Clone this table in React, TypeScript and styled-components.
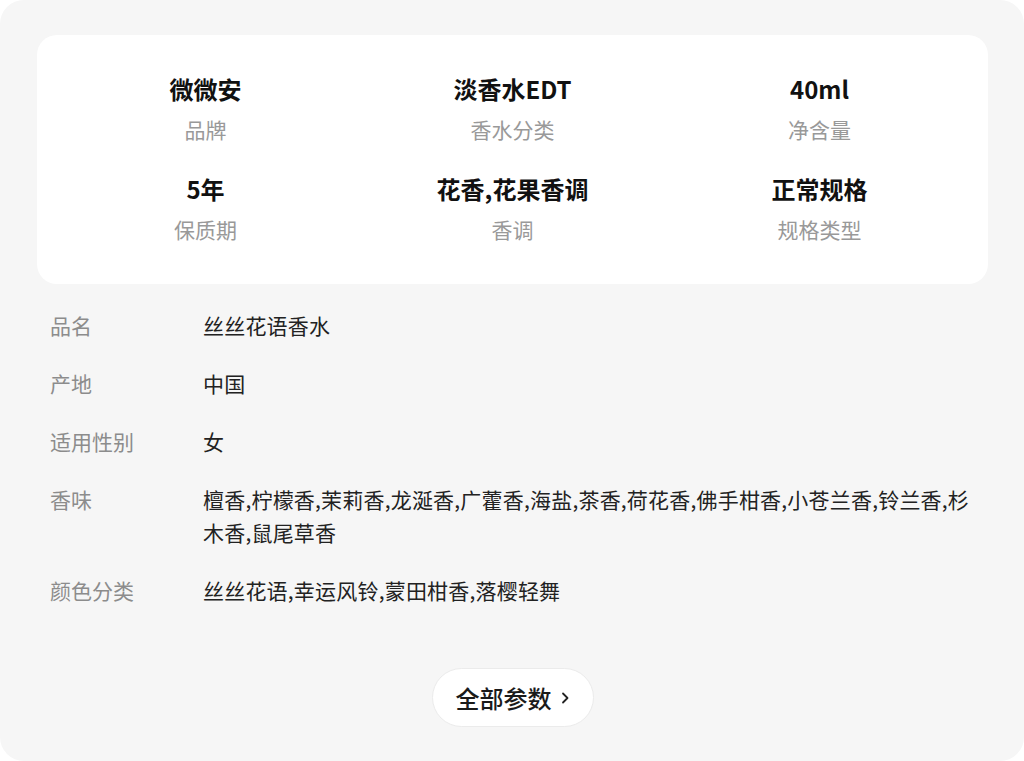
import styled, { createGlobalStyle } from 'styled-components';

interface Highlight {
    value: string;
    label: string;
}

interface Param {
    name: string;
    value: string;
}

const highlights: Highlight[] = [
    { value: '微微安', label: '品牌' },
    { value: '淡香水EDT', label: '香水分类' },
    { value: '40ml', label: '净含量' },
    { value: '5年', label: '保质期' },
    { value: '花香,花果香调', label: '香调' },
    { value: '正常规格', label: '规格类型' },
];

const params: Param[] = [
    { name: '品名', value: '丝丝花语香水' },
    { name: '产地', value: '中国' },
    { name: '适用性别', value: '女' },
    { name: '香味', value: '檀香,柠檬香,茉莉香,龙涎香,广藿香,海盐,茶香,荷花香,佛手柑香,小苍兰香,铃兰香,杉木香,鼠尾草香' },
    { name: '颜色分类', value: '丝丝花语,幸运风铃,蒙田柑香,落樱轻舞' },
];

function App() {
    return (
        <>
            <GlobalStyle />
            <PanelStyle>
                <SummaryCardStyle>
                    {
                        highlights.map((item) => (
                            <SummaryItemStyle key={item.label}>
                                <strong>{item.value}</strong>
                                <span>{item.label}</span>
                            </SummaryItemStyle>
                        ))
                    }
                </SummaryCardStyle>

                <ParamListStyle>
                    {
                        params.map((param) => (
                            <ParamRowStyle key={param.name}>
                                <dt>{param.name}</dt>
                                <dd>{param.value}</dd>
                            </ParamRowStyle>
                        ))
                    }
                </ParamListStyle>

                <FooterStyle>
                    <MoreButtonStyle>
                        全部参数
                        <svg width="9" height="14" viewBox="0 0 9 14">
                            <path d="M2 2.5 L6.5 7 L2 11.5" fill="none" stroke="#222" strokeWidth="1.8" strokeLinecap="round" strokeLinejoin="round" />
                        </svg>
                    </MoreButtonStyle>
                </FooterStyle>
            </PanelStyle>
        </>
    );
}

const GlobalStyle = createGlobalStyle`
    html, body {
        margin: 0;
        padding: 0;
        background: #fff;
    }

    body {
        font-family: "Noto Sans CJK SC", "Noto Sans", sans-serif;
    }
`;

const PanelStyle = styled.div`
    width: 1024px;
    height: 761px;
    box-sizing: border-box;
    padding: 35px 36px 0 37px;
    background: #f6f6f6;
    border-radius: 24px;
    overflow: hidden;
`;

const SummaryCardStyle = styled.div`
    display: grid;
    grid-template-columns: repeat(3, 1fr);
    row-gap: 29px;
    padding: 38px 15px 40px;
    background: #fff;
    border-radius: 20px;
`;

const SummaryItemStyle = styled.div`
    display: flex;
    flex-direction: column;
    align-items: center;
    gap: 9px;

    strong {
        font-size: 24px;
        line-height: 32px;
        font-weight: 700;
        color: #111;
    }

    span {
        font-size: 21px;
        line-height: 30px;
        color: #999;
    }
`;

const ParamListStyle = styled.dl`
    display: flex;
    flex-direction: column;
    gap: 25px;
    margin: 0;
    padding: 25px 13px 0;
`;

const ParamRowStyle = styled.div`
    display: flex;
    font-size: 21px;
    line-height: 33px;

    dt {
        flex: 0 0 153px;
        color: #8c8c8c;
    }

    dd {
        flex: 1;
        margin: 0;
        color: #222;
        letter-spacing: 0.2px;
        line-height: 33px;
    }
`;

const FooterStyle = styled.div`
    display: flex;
    justify-content: center;
    padding-top: 61px;
`;

const MoreButtonStyle = styled.button`
    display: flex;
    align-items: center;
    justify-content: center;
    gap: 9px;
    width: 162px;
    height: 59px;
    padding: 0;
    border: 1px solid #ebebeb;
    border-radius: 30px;
    background: #fff;
    font-family: inherit;
    font-size: 24px;
    font-weight: 500;
    color: #1a1a1a;
    cursor: pointer;
`;

export default App;
